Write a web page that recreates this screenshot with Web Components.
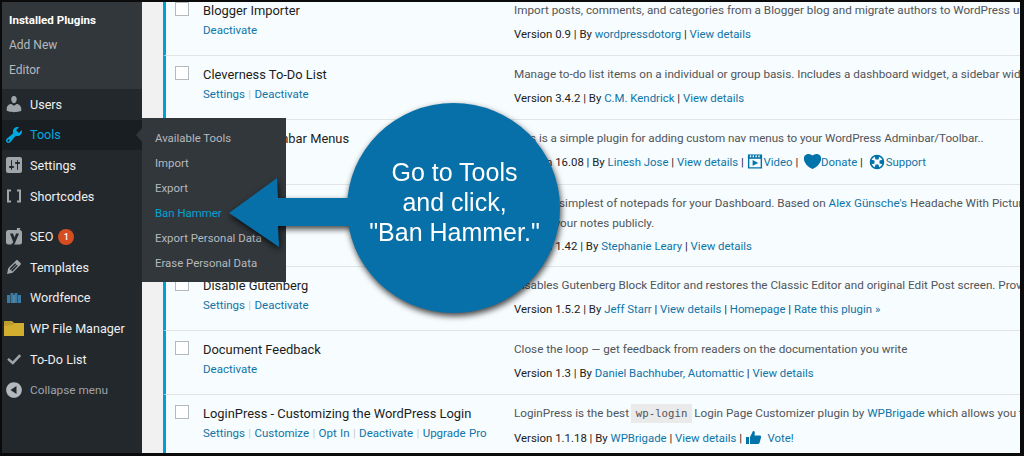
<!DOCTYPE html>
<html><head><meta charset="utf-8">
<style>
html,body{margin:0;padding:0;background:#000;overflow:hidden}
body{font-family:Roboto,"Liberation Sans",sans-serif;font-size:11.7px}
a{color:#0f74a8;text-decoration:none}
svg{display:block}
</style></head>
<body>
<template id="t-page"><style>
:host{display:block;position:relative;width:1024px;height:456px;box-sizing:border-box;border:solid #0b0b0b;border-width:2px 4px 3px 2px;overflow:hidden;background:#f1f1f1}
.wrap{display:flex;height:100%}
.main{flex:1;min-width:0;padding-left:21px;overflow:hidden}
</style><div class="wrap"><slot name="side"></slot><div class="main"><slot></slot></div></div><slot name="over"></slot></template>

<template id="t-side"><style>
:host{display:block;width:140px;flex:none;background:#23282d;height:100%}
.sub{background:#32373c;padding:5.5px 0 6.5px;--sub-fs:12px}
</style><div class="sub"><slot name="sub"></slot></div><div class="list"><slot></slot></div></template>

<template id="t-sub"><style>
:host{display:block;height:25px;line-height:25px;padding-left:var(--sub-x,7px);color:#b4b9be;white-space:nowrap;font-size:var(--sub-fs,11.4px)}
:host([current]){color:#fff;font-weight:700;font-size:11.6px}
:host([hot]){color:#00a5d4}
</style><slot></slot></template>

<template id="t-item"><style>
:host{display:flex;align-items:center;height:30.6px;color:#eee;white-space:nowrap;font-size:12.6px;position:relative}
:host([active]){background:#191e23;color:#00a9df}
:host([dim]){color:#9ea3a8;font-size:11.8px}
.ic{width:28px;box-sizing:border-box;padding-right:4px;flex:none;display:flex;justify-content:center;color:#a0a5aa}
:host([active]) .ic{color:#00a9df}
.b{display:inline-flex;align-items:center;justify-content:center;margin-left:5px;width:16px;height:16px;border-radius:50%;background:#d54e21;color:#fff;font-size:9px;font-weight:500}
.b[hidden]{display:none}
</style><span class="ic"><slot name="icon"></slot></span><span><slot></slot></span><span class="b" hidden><slot name="badge"></slot></span></template>

<template id="t-row"><style>
:host{display:grid;grid-template-columns:28px 311px minmax(0,1fr);box-sizing:border-box;background:#f7fcfe;border-left:3px solid #00a0d2;border-bottom:1px solid #e1e5e7;padding:8px 0 0 9px;height:var(--h,64px);overflow:hidden;color:#32373c;line-height:20px}
.cb{width:14px;height:14px;margin-top:2px;background:#fff;border:1px solid #b4b9be;box-sizing:border-box}
.name{color:#1c1c1c;font-size:12.9px;white-space:nowrap;padding-top:1px;height:19px;line-height:19px}
.act{color:#ccc;white-space:nowrap;font-size:11.5px;word-spacing:.5px}
.desc{white-space:nowrap;color:#50555a;overflow:hidden;line-height:var(--dl,19.5px);padding-top:1.3px;letter-spacing:var(--ls,0)}
.meta{white-space:nowrap;margin-top:var(--mt,3px);color:#222;font-size:11.4px;overflow:hidden}
</style><div class="cb"></div><div><div class="name"><slot name="name"></slot></div><div class="act"><slot name="act"></slot></div></div><div style="min-width:0"><div class="desc"><slot name="desc"></slot></div><div class="meta"><slot name="meta"></slot></div></div></template>

<template id="t-fly"><style>
:host{display:block;position:absolute;left:140px;top:116px;width:144px;height:164px;box-sizing:border-box;background:#32373c;padding:7.5px 0 0;--sub-x:13px}
.n{position:absolute;left:-6px;top:10px;width:0;height:0;border:6px solid transparent;border-left:0;border-right-color:#32373c;border-top-width:7px;border-bottom-width:7px}
</style><i class="n"></i><slot></slot></template>

<template id="t-callout"><style>
:host{display:block;position:absolute;left:225px;top:99px;width:340px;height:216px;filter:drop-shadow(1px 3px 3px rgba(0,0,0,.75));color:#fff}
svg{position:absolute;left:0;top:0}
.c{position:absolute;left:121px;top:2px;width:213px;height:210px;display:flex;align-items:center;justify-content:center;text-align:center;font:25px/30px "Liberation Sans",Arial,sans-serif}
.t{margin-top:-12px}
</style><svg width="340" height="216" viewBox="0 0 340 216"><polygon fill="#0770a9" points="2,112 50,77 51,97 130,97 130,125 51,125 52,146"/><ellipse cx="226.500" cy="107" rx="106.500" ry="105" fill="#0770a9"/></svg><div class="c"><div class="t"><slot></slot></div></div></template>

<wp-page>
  <wp-sidebar slot="side">
    <wp-sub slot="sub" current>Installed Plugins</wp-sub>
    <wp-sub slot="sub">Add New</wp-sub>
    <wp-sub slot="sub">Editor</wp-sub>
    <wp-item>
      <svg slot="icon" width="20" height="20" viewBox="0 0 20 20" fill="currentColor"><path d="M10 9.25c-2.27 0-2.73-3.44-2.73-3.44C7 4.02 7.82 2 9.97 2c2.16 0 2.98 2.02 2.71 3.81 0 0-.41 3.44-2.68 3.44zm0 2.57L12.72 10c2.39 0 4.52 2.33 4.52 4.53v2.49s-3.65 1.13-7.24 1.13c-3.65 0-7.24-1.13-7.24-1.13v-2.49c0-2.25 1.94-4.48 4.47-4.48z"/></svg>Users</wp-item>
    <wp-item active>
      <svg slot="icon" width="20" height="20" viewBox="0 0 20 20" fill="currentColor"><path d="M16.68 9.77c-1.34 1.34-3.3 1.67-4.95.99l-5.41 6.52c-.99.99-2.59.99-3.58 0s-.99-2.59 0-3.57l6.52-5.42c-.68-1.65-.35-3.61.99-4.95 1.28-1.28 3.12-1.62 4.72-1.06l-2.89 2.89 2.82 2.82 2.86-2.87c.53 1.58.18 3.39-1.08 4.65zM3.81 16.21c.4.39 1.04.39 1.43 0 .4-.4.4-1.04 0-1.43-.39-.4-1.03-.4-1.43 0-.39.39-.39 1.03 0 1.43z"/></svg>Tools</wp-item>
    <wp-item>
      <svg slot="icon" width="20" height="20" viewBox="0 0 20 20" fill="currentColor"><path d="M18 16V4c0-1.100-.9-2-2-2H4c-1.100 0-2 .9-2 2v12c0 1.100.9 2 2 2h12c1.100 0 2-.9 2-2zM8 11h1c.55 0 1 .45 1 1s-.45 1-1 1H8v1.500c0 .28-.22.5-.5.5s-.5-.22-.5-.5V13H6c-.55 0-1-.45-1-1s.45-1 1-1h1V5.500c0-.28.22-.5.5-.5s.5.22.5.5V11zm5-2h-1c-.55 0-1-.45-1-1s.45-1 1-1h1V5.500c0-.28.22-.5.5-.5s.5.22.5.5V7h1c.55 0 1 .45 1 1s-.45 1-1 1h-1v5.500c0 .28-.22.5-.5.5s-.5-.22-.5-.5V9z"/></svg>Settings</wp-item>
    <wp-item>
      <svg slot="icon" width="20" height="20" viewBox="0 0 20 20" fill="none" stroke="currentColor" stroke-width="2"><path d="M7 4.500H4v11h3M13 4.500h3v11h-3"/></svg>Shortcodes</wp-item>
    <div style="height:10px"></div>
    <wp-item>
      <svg slot="icon" width="20" height="20" viewBox="0 0 20 20"><rect x="2" y="3" width="16" height="14.500" rx="2.500" fill="#a0a5aa"/><path d="M6 6.500h3l1.500 4 1.500-4h3l-4 9.500c-.6 1.500-1.500 3-3.500 3v-2.500c1 0 1.500-.4 1.800-1.300z" fill="#23282d"/><path d="M13 1h3.500l-2 4h-2z" fill="#a0a5aa"/></svg>SEO<span slot="badge">1</span></wp-item>
    <wp-item>
      <svg slot="icon" width="20" height="20" viewBox="0 0 20 20" fill="currentColor"><path d="M13.890 3.390l2.710 2.720c.46.46.42 1.240.03 1.640l-8.010 8.020-5.560 1.160 1.160-5.580s7.600-7.630 7.990-8.030c.39-.39 1.220-.39 1.680.07zm-2.730 2.790l-5.590 5.610 1.110 1.110 5.540-5.650zm-2.970 8.230l5.580-5.600-1.070-1.080-5.590 5.600z"/></svg>Templates</wp-item>
    <wp-item>
      <svg slot="icon" width="20" height="20" viewBox="0 0 20 20"><g fill="#3a7aa3"><rect x="3" y="7" width="3" height="8"/><rect x="6.500" y="5" width="3" height="10"/><rect x="10.500" y="5" width="3" height="10"/><rect x="14" y="7" width="3" height="8"/></g><rect x="9.500" y="7" width="1" height="8" fill="#7fb3d1"/></svg>Wordfence</wp-item>
    <wp-item>
      <svg slot="icon" width="22" height="20" viewBox="0 0 22 20" style="margin:0 -1px"><path fill="#bd9d2c" d="M2 3h7l2 2h9c.6 0 1 .4 1 1v11c0 .6-.4 1-1 1H2c-.6 0-1-.4-1-1V4c0-.6.4-1 1-1z"/><path fill="#d1ad30" d="M1 8l8-1 3-2h8c.6 0 1 .4 1 1v11c0 .6-.4 1-1 1H2c-.6 0-1-.4-1-1z"/></svg>WP File Manager</wp-item>
    <wp-item>
      <svg slot="icon" width="20" height="20" viewBox="0 0 20 20" fill="currentColor"><path d="M15.300 5.300l1.800 1.600-8.200 8.800-5.700-5 1.600-1.800 3.900 3.400z"/></svg>To-Do List</wp-item>
    <wp-item dim>
      <svg slot="icon" width="20" height="20" viewBox="0 0 20 20" fill="#b4b9be"><path fill-rule="evenodd" d="M10 2.160c4.330 0 7.840 3.510 7.840 7.840s-3.510 7.840-7.840 7.840-7.840-3.510-7.840-7.840 3.510-7.840 7.840-7.840zM12.500 6L6.500 10l6 4z"/></svg>Collapse menu</wp-item>
  </wp-sidebar>

  <div style="margin-top:-10px">
  <plugin-row>
    <span slot="name">Blogger Importer</span><span slot="act"><a href="#">Deactivate</a></span>
    <span slot="desc">Import posts, comments, and categories from a Blogger blog and migrate authors to WordPress users.</span>
    <span slot="meta">Version 0.9 | By <a href="#">wordpressdotorg</a> | <a href="#">View details</a></span>
  </plugin-row>
  <plugin-row>
    <span slot="name">Cleverness To-Do List</span><span slot="act"><a href="#">Settings</a> | <a href="#">Deactivate</a></span>
    <span slot="desc">Manage to-do list items on a individual or group basis. Includes a dashboard widget, a sidebar widget and more.</span>
    <span slot="meta">Version 3.4.2 | By <a href="#">C.M. Kendrick</a> | <a href="#">View details</a></span>
  </plugin-row>
  <plugin-row style="--h:65px;--ls:-.06px">
    <span slot="name">Custom Adminbar Menus</span><span slot="act"><a href="#">Deactivate</a></span>
    <span slot="desc">This is a simple plugin for adding custom nav menus to your WordPress Adminbar/Toolbar..</span>
    <span slot="meta" style="display:inline-flex;align-items:center">Version 16.08 | By&nbsp;<a href="#">Linesh Jose</a>&nbsp;|&nbsp;<a href="#">View details</a>&nbsp;|&nbsp;<svg width="16" height="17" viewBox="0 0 17 17" fill="#0073aa" style="margin-right:1px"><path d="M1 2h15v14H1zM2.500 5.500v9h12v-9z" fill-rule="evenodd"/><path d="M1 1h15v4H1z"/><path d="M6 7l6 3-6 3z"/><g fill="#f7fcfe"><rect x="3" y="2" width="1.500" height="2"/><rect x="6" y="2" width="1.500" height="2"/><rect x="9" y="2" width="1.500" height="2"/><rect x="12" y="2" width="1.500" height="2"/></g></svg><a href="#">Video</a>&nbsp;|&nbsp;<svg width="17" height="17" viewBox="2 2 16 16" fill="#0073aa" style="margin-left:3px"><path d="M10 17.120c3.330-1.400 5.740-3.790 7.040-6.210 1.280-2.410 1.460-4.810.32-6.250-1.030-1.290-2.370-1.780-3.730-1.740s-2.680.63-3.630 1.460c-.95-.83-2.270-1.420-3.630-1.460s-2.700.45-3.730 1.740c-1.140 1.440-.96 3.840.34 6.250 1.280 2.420 3.690 4.810 7.020 6.210z"/></svg><a href="#">Donate</a>&nbsp;|&nbsp;<svg width="16" height="16" viewBox="0 0 16 16" style="margin:0 1px 0 3px"><circle cx="8" cy="8" r="6.500" fill="#f7fcfe" stroke="#0073aa" stroke-width="1.500"/><path fill="#0073aa" d="M5.500 1.500h5L9.500 5.500h-3zM5.500 14.500h5L9.500 10.500h-3zM1.500 5.500v5L5.500 9.500v-3zM14.500 5.500v5L10.500 9.500v-3z"/></svg><a href="#">Support</a></span>
  </plugin-row>
  <plugin-row style="--h:82px">
    <span slot="name">Dashboard Notepads</span><span slot="act"><a href="#">Deactivate</a></span>
    <span slot="desc">Just the simplest of notepads for your Dashboard. Based on <a href="#">Alex Günsche's</a> Headache With Pictures. Share<br>Display your notes publicly.</span>
    <span slot="meta">Version 1.42 | By <a href="#">Stephanie Leary</a> | <a href="#">View details</a></span>
  </plugin-row>
  <plugin-row>
    <span slot="name">Disable Gutenberg</span><span slot="act"><a href="#">Settings</a> | <a href="#">Deactivate</a></span>
    <span slot="desc">Disables Gutenberg Block Editor and restores the Classic Editor and original Edit Post screen. Provides options.</span>
    <span slot="meta">Version 1.5.2 | By <a href="#">Jeff Starr</a> | <a href="#">View details</a> | <a href="#">Homepage</a> | <a href="#">Rate this plugin »</a></span>
  </plugin-row>
  <plugin-row>
    <span slot="name">Document Feedback</span><span slot="act"><a href="#">Deactivate</a></span>
    <span slot="desc">Close the loop — get feedback from readers on the documentation you write</span>
    <span slot="meta">Version 1.3 | By <a href="#">Daniel Bachhuber, Automattic</a> | <a href="#">View details</a></span>
  </plugin-row>
  <plugin-row style="--mt:4px">
    <span slot="name">LoginPress - Customizing the WordPress Login</span><span slot="act"><a href="#">Settings</a> | <a href="#">Customize</a> | <a href="#">Opt In</a> | <a href="#">Deactivate</a> | <a href="#">Upgrade Pro</a></span>
    <span slot="desc">LoginPress is the best <code style="font:10.7px 'DejaVu Sans Mono','Liberation Mono',monospace;background:#eaeaea;padding:3px 5px;margin:0 -1px">wp-login</code> Login Page Customizer plugin by <a href="#">WPBrigade</a> which allows you to customize</span>
    <span slot="meta" style="display:inline-flex;align-items:center">Version 1.1.18 | By&nbsp;<a href="#">WPBrigade</a>&nbsp;|&nbsp;<a href="#">View details</a>&nbsp;|&nbsp;<svg width="17" height="17" viewBox="0 0 17 17" fill="#0073aa" style="margin-right:3px"><path d="M1 8h3v7H1zM5 8l3-6c1.300-.2 2 .8 1.800 2L9.500 6.500H15c1 0 1.300 1 1 2l-1.500 5.500c-.2.7-.7 1-1.500 1H5z"/></svg><a href="#">&nbsp;Vote!</a></span>
  </plugin-row>
  </div>

  <tools-flyout slot="over">
    <wp-sub>Available Tools</wp-sub><wp-sub>Import</wp-sub><wp-sub>Export</wp-sub><wp-sub hot>Ban Hammer</wp-sub><wp-sub>Export Personal Data</wp-sub><wp-sub>Erase Personal Data</wp-sub>
  </tools-flyout>
  <call-out slot="over">Go to Tools<br>and click,<br>"Ban Hammer."</call-out>
</wp-page>
<script>
const mk=(tag,id,after)=>customElements.define(tag,class extends HTMLElement{
  constructor(){super();this.attachShadow({mode:'open'}).appendChild(document.getElementById(id).content.cloneNode(true));}
  connectedCallback(){if(after)after(this);}
});
mk('wp-page','t-page');mk('wp-sidebar','t-side');mk('wp-sub','t-sub');
mk('wp-item','t-item',el=>{if(el.querySelector('[slot=badge]'))el.shadowRoot.querySelector('.b').hidden=false;});
mk('plugin-row','t-row');mk('tools-flyout','t-fly');mk('call-out','t-callout');
</script>
</body></html>
